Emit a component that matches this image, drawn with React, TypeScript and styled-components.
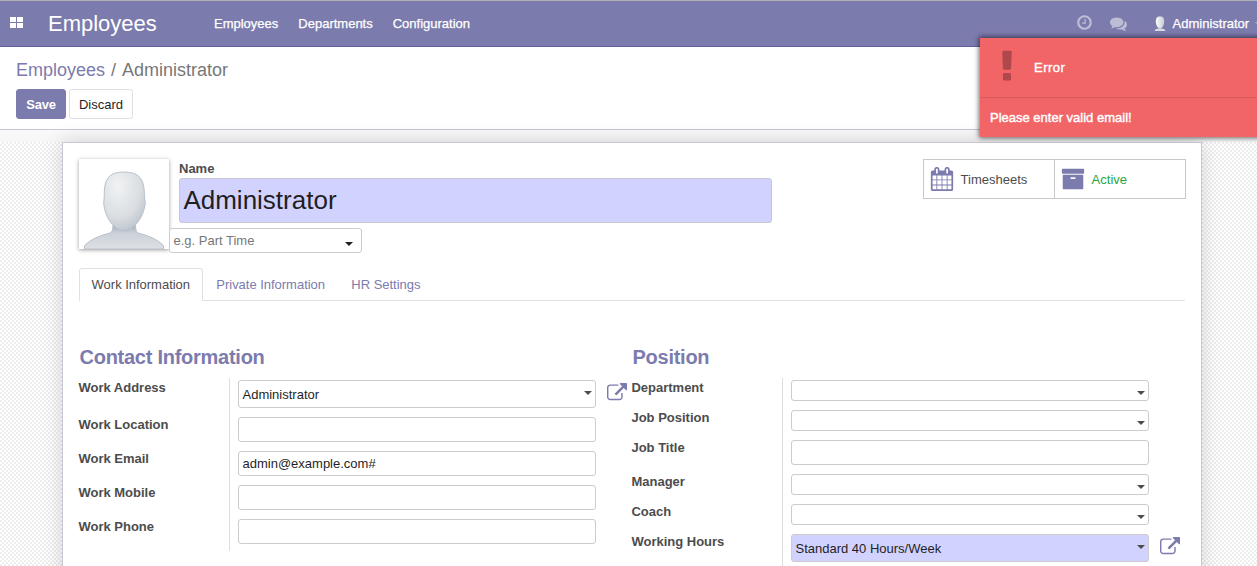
import React from 'react';
import styled, { createGlobalStyle } from 'styled-components';

const PURPLE = '#7c7bad';

const Global = createGlobalStyle`
  * { box-sizing: border-box; }
  html, body { margin: 0; height: 566px; overflow: hidden; }
  body {
    font: 13px/20px "Liberation Sans", Arial, sans-serif;
    color: #4c4c4c;
    background: #fff;
  }
  input, button { font: inherit; }
`;

const Page = styled.div`
  position: relative;
  width: 1257px;
  height: 566px;
  overflow: hidden;
  display: flex;
  flex-direction: column;
`;

const Navbar = styled.nav`
  flex: none;
  display: flex;
  align-items: center;
  height: 47px;
  border-top: 1px solid #afafb4;
  border-bottom: 1px solid #5f5e97;
  background: ${PURPLE};
  color: #fff;
  padding-left: 10px;
`;

const AppsIcon = styled.span`
  display: grid;
  grid-template-columns: 6px 6px;
  gap: 1px;
  width: 13px;
  margin: 0 25px 2px 0;
  i { height: 5px; background: #fff; }
`;

const Brand = styled.span`
  width: 166px;
  font-size: 22px;
`;

const NavLink = styled.a`
  margin-right: 20px;
  white-space: nowrap;
  -webkit-text-stroke: 0.25px #fff;
`;

const Systray = styled.div`
  display: flex;
  align-items: center;
  gap: 17px;
  margin-left: auto;
  > svg { flex: none; margin-bottom: 2px; }
  > svg + svg { margin-bottom: 0; }
`;

const UserMenu = styled.span`
  display: flex;
  align-items: center;
  width: 103px;
  overflow: hidden;
  margin-left: 10px;
  gap: 6px;
  white-space: nowrap;
  -webkit-text-stroke: 0.25px #fff;
  svg { flex: none; margin-right: 0.6px; }
`;

const Caret = styled.i<{ $c?: string }>`
  flex: none;
  border: 4px solid transparent;
  border-top-color: ${(p) => p.$c || '#4c4c4c'};
  border-bottom: 0;
`;

const ControlPanel = styled.header`
  flex: none;
  height: 83px;
  padding: 12px 16px 0;
  border-bottom: 1px solid #c8c8d3;
  background: #fff;
`;

const Breadcrumb = styled.div`
  height: 30px;
  line-height: 22px;
  font-size: 18px;
  color: #777;
  a { color: ${PURPLE}; }
  span { padding: 0 6px; }
`;

const Buttons = styled.div`
  display: flex;
  gap: 3px;
`;

const Button = styled.button<{ $primary?: boolean }>`
  height: 30px;
  width: ${(p) => (p.$primary ? 50 : 64)}px;
  padding: 1px 0 0;
  border-radius: 3px;
  border: 1px solid ${(p) => (p.$primary ? PURPLE : '#dfdfe6')};
  background: ${(p) => (p.$primary ? PURPLE : '#fff')};
  color: ${(p) => (p.$primary ? '#fff' : '#1f1f1f')};
  font-weight: ${(p) => (p.$primary ? 700 : 400)};
  letter-spacing: ${(p) => (p.$primary ? '-0.25px' : '0')};
`;

const Content = styled.main`
  flex: 1;
  min-height: 0;
  padding: 12px 55px 0 62px;
  background:
    linear-gradient(#f9f9f9, #f7f7f7) 0 0 / 100% 12px no-repeat,
    repeating-conic-gradient(#eeeeee 0 25%, #fff 0 50%) 0 0 / 4px 4px;
`;

const Sheet = styled.section`
  height: 700px;
  padding: 16px 16px 0;
  border: 1px solid #c8c8d3;
  background: #fff;
  box-shadow: 0 0 20px rgba(0, 0, 0, 0.16);
`;

const Header = styled.div`
  display: flex;
  height: 109px;
`;

const Avatar = styled.div`
  width: 90px;
  height: 90px;
  margin-right: 10px;
  box-shadow: 0 1px 4px rgba(0, 0, 0, 0.4);
  svg { display: block; }
`;

const TitleBlock = styled.div`
  width: 593px;
`;

const Label = styled.label`
  display: block;
  height: 19px;
  font-weight: 700;
  white-space: nowrap;
`;

const NameInput = styled.input`
  display: block;
  width: 593px;
  height: 45px;
  padding: 0 4px 0 3.4px;
  border: 1px solid #c8c8d3;
  border-radius: 3px;
  background: #d2d2ff;
  color: #1f1f1f;
  font-size: 26px;
`;

const TagSelect = styled.div`
  display: flex;
  align-items: center;
  justify-content: space-between;
  width: 193px;
  height: 25px;
  margin: 5px 0 0 -10px;
  padding: 0 8px 0 3.5px;
  border: 1px solid #ccc;
  border-radius: 3px;
  background: #fff;
  color: #777;
  i { margin-top: 6px; }
`;

const StatButtons = styled.div`
  display: flex;
  margin: 0 -1px 0 auto;
  height: 40px;
  border: 1px solid #c8c8c8;
`;

const StatButton = styled.div<{ $color?: string }>`
  display: flex;
  align-items: center;
  width: 130px;
  gap: 6.6px;
  padding-left: 6px;
  color: ${(p) => p.$color || '#4c4c4c'};
  span { padding-top: 2px; }
  & + & { width: 131px; border-left: 1px solid #c8c8c8; }
`;

const Tabs = styled.div`
  display: flex;
  height: 33px;
  border-bottom: 1px solid #dee2e6;
`;

const Tab = styled.a<{ $active?: boolean }>`
  height: 33px;
  padding: 6px 12px 6px 11.6px;
  margin-right: 0.7px;
  letter-spacing: -0.02px;
  border: 1px solid ${(p) => (p.$active ? '#dee2e6' : 'transparent')};
  border-bottom: 0;
  border-radius: 3px 3px 0 0;
  background: ${(p) => (p.$active ? '#fff' : 'transparent')};
  color: ${(p) => (p.$active ? '#4c4c4c' : PURPLE)};
`;

const Groups = styled.div`
  display: flex;
  padding-top: 43px;
`;

const Group = styled.div`
  width: 553px;
`;

const GroupTitle = styled.h2`
  margin: 0;
  padding-left: 0.5px;
  height: 34px;
  font-size: 20px;
  line-height: 26px;
  letter-spacing: -0.26px;
  color: ${PURPLE};
`;

const Fields = styled.div`
  display: grid;
  grid-template-columns: 151px 1fr;
`;

const LabelCell = styled.div<{ $h: number }>`
  height: ${(p) => p.$h}px;
  border-right: 1px solid #ddd;
  label { margin-left: -0.6px; }
`;

const ValueCell = styled.div`
  display: flex;
  padding: 2px 0 0 8px;
  svg { margin: 3px 0 0 11px; }
`;

const Field = styled.div<{ $h: number; $required?: boolean }>`
  display: flex;
  align-items: center;
  justify-content: space-between;
  width: 358px;
  height: ${(p) => p.$h}px;
  padding: ${(p) => (p.$h === 28 ? '1px' : '0')} 3px 0 3.5px;
  border: 1px solid #ccc;
  border-radius: 3px;
  background: ${(p) => (p.$required ? '#d2d2ff' : '#fff')};
  color: #1f1f1f;
  i { margin: ${(p) => (p.$h === 21 ? '5px 0 0 auto' : '0 0 4px auto')}; }
`;

const Toast = styled.aside`
  position: absolute;
  top: 38px;
  left: 980px;
  width: 300px;
  height: 99px;
  background: #f16567;
  color: #fff;
  -webkit-text-stroke: 0.4px #fff;
  box-shadow: 0 0 5px 1px rgba(0, 0, 0, 0.6);
`;

const ToastTitle = styled.div`
  display: flex;
  align-items: center;
  height: 60px;
  border-bottom: 1px solid #d95b5d;
  padding-left: 8px;
  letter-spacing: 0.5px;
  svg { margin: 0 8px 2px 0; stroke: none; }
`;

const ToastText = styled.div`
  padding: 10px;
`;

const ICONS = {
  clock:
    'M1024 544v448q0 14-9 23t-23 9h-320q-14 0-23-9t-9-23v-64q0-14 9-23t23-9h224v-352q0-14 9-23t23-9h64q14 0 23 9t9 23zm416 352q0-148-73-273t-198-198-273-73-273 73-198 198-73 273 73 273 198 198 273 73 273-73 198-198 73-273zm224 0q0 209-103 385.5t-279.5 279.5-385.5 103-385.5-103-279.5-279.5-103-385.5 103-385.5 279.5-279.5 385.5-103 385.5 103 279.5 279.5 103 385.5z',
  comments:
    'M1408 768q0 139-94 257t-256.5 186.5-353.5 68.5q-86 0-176-16-124 88-278 128-36 9-86 16h-3q-11 0-20.5-8t-11.5-21q-1-3-1-6.5t.5-6.5 2-6l2.5-5 3.5-5.5 4-5 4.5-5 4-4.5q5-6 23-25t26-29.5 22.5-29 25-38.5 20.5-44q-124-72-195-177t-71-224q0-139 94-257t256.5-186.5 353.5-68.5 353.5 68.5 256.5 186.5 94 257zm384 256q0 120-71 224.5t-195 176.5q10 24 20.5 44t25 38.5 22.5 29 26 29.5 23 25q1 1 4 4.5t4.5 5 4 5 3.5 5.5l2.5 5 2 6 .5 6.5-1 6.5q-3 14-13 22t-22 7q-50-7-86-16-154-40-278-128-90 16-176 16-271 0-472-132 58 4 88 4 161 0 309-45t264-129q125-92 192-212t67-254q0-77-23-152 129 71 204 178t75 230z',
  external:
    'M1408 928v320q0 119-84.5 203.5t-203.5 84.5h-832q-119 0-203.5-84.5t-84.5-203.5v-832q0-119 84.5-203.5t203.5-84.5h704q14 0 23 9t9 23v64q0 14-9 23t-23 9h-704q-66 0-113 47t-47 113v832q0 66 47 113t113 47h832q66 0 113-47t47-113v-320q0-14 9-23t23-9h64q14 0 23 9t9 23zm384-864v512q0 26-19 45t-45 19-45-19l-176-176-652 652q-10 10-23 10t-23-10l-114-114q-10-10-10-23t10-23l652-652-176-176q-19-19-19-45t19-45 45-19h512q26 0 45 19t19 45z',
  calendar:
    'M192 1664h288v-288h-288v288zm352 0h320v-288h-320v288zm-352-352h288v-320h-288v320zm352 0h320v-320h-320v320zm-352-384h288v-288h-288v288zm736 736h320v-288h-320v288zm-384-736h320v-288h-320v288zm768 736h288v-288h-288v288zm-384-352h320v-320h-320v320zm-352-864v-288q0-13-9.5-22.5t-22.5-9.5h-64q-13 0-22.5 9.5t-9.5 22.5v288q0 13 9.5 22.5t22.5 9.5h64q13 0 22.5-9.5t9.5-22.5zm736 864h288v-320h-288v320zm-384-384h320v-288h-320v288zm384 0h288v-288h-288v288zm32-480v-288q0-13-9.5-22.5t-22.5-9.5h-64q-13 0-22.5 9.5t-9.5 22.5v288q0 13 9.5 22.5t22.5 9.5h64q13 0 22.5-9.5t9.5-22.5zm384-64v1280q0 52-38 90t-90 38h-1408q-52 0-90-38t-38-90v-1280q0-52 38-90t90-38h128v-96q0-66 47-113t113-47h64q66 0 113 47t47 113v96h384v-96q0-66 47-113t113-47h64q66 0 113 47t47 113v96h128q52 0 90 38t38 90z',
  archive:
    'M1088 832q0-26-19-45t-45-19h-256q-26 0-45 19t-19 45 19 45 45 19h256q26 0 45-19t19-45zm576-192v960q0 26-19 45t-45 19h-1408q-26 0-45-19t-19-45v-960q0-26 19-45t45-19h1408q26 0 45 19t19 45zm64-448v256q0 26-19 45t-45 19h-1536q-26 0-45-19t-19-45v-256q0-26 19-45t45-19h1536q26 0 45 19t19 45z',
  exclamation:
    'M1088 1248v224q0 26-19 45t-45 19h-256q-26 0-45-19t-19-45v-224q0-26 19-45t45-19h256q26 0 45 19t19 45zm30-1056l-28 768q-1 26-20.5 45t-45.5 19h-256q-26 0-45.5-19t-20.5-45l-28-768q-1-26 17.5-45t44.5-19h320q26 0 44.5 19t17.5 45z',
};

const Icon = ({ name, size, color, opacity = 1 }: { name: keyof typeof ICONS; size: number; color: string; opacity?: number }) => (
  <svg width={size} height={size} viewBox="0 0 1792 1792" fill={color} opacity={opacity}>
    <path d={ICONS[name]} />
  </svg>
);

const Person = () => (
  <svg width="90" height="90" viewBox="0 0 90 90">
    <defs>
      <radialGradient id="face" cx="0.35" cy="0.25" r="0.9">
        <stop offset="0" stopColor="#f1f3f4" />
        <stop offset="0.6" stopColor="#d9dde1" />
        <stop offset="1" stopColor="#b3bbc6" />
      </radialGradient>
      <linearGradient id="body" x1="0" y1="0" x2="0" y2="1">
        <stop offset="0" stopColor="#a3adbb" />
        <stop offset="0.35" stopColor="#ccd2d9" />
        <stop offset="1" stopColor="#dce0e4" />
      </linearGradient>
    </defs>
    <rect width="90" height="90" fill="#fff" />
    <path d="M5.500 90V86.500Q14 78 31 74Q34 73 34 66H56.500Q56.500 73 59 74Q76 78 84.500 86.500V90Z" fill="url(#body)" stroke="#b9c1cb" />
    <path d="M45 13C58 13 64.500 18 65.300 32Q65.200 38 66.300 44C64.500 60 54 71.500 45 71.500S26 60 24.700 44Q25.500 38 25.300 32C26 18 32 13 45 13Z" fill="url(#face)" stroke="#b9c2cc" />
  </svg>
);

const SmallPerson = () => (
  <svg width="12" height="16" viewBox="0 0 12 16">
    <defs>
      <linearGradient id="mini" x1="0" y1="0" x2="1" y2="0">
        <stop offset="0" stopColor="#fbfcfb" />
        <stop offset="1" stopColor="#c6ced2" />
      </linearGradient>
    </defs>
    <path d="M0.500 15Q1 12.800 4 12.500H8Q11 12.800 11.500 15Z" fill="#d5dce4" />
    <path d="M6 0.500C9.300 0.500 10.400 2.500 10.200 6C10 9 8.500 12 6 12.500C3.500 12 2 9 1.800 6C1.600 2.500 2.700 0.500 6 0.500Z" fill="url(#mini)" />
  </svg>
);

type Row = { label: string; h: number; row: number; value?: string; select?: boolean; required?: boolean; link?: boolean };

const contact: Row[] = [
  { label: 'Work Address', h: 28, row: 37, value: 'Administrator', select: true, link: true },
  { label: 'Work Location', h: 25, row: 34 },
  { label: 'Work Email', h: 25, row: 34, value: 'admin@example.com#' },
  { label: 'Work Mobile', h: 25, row: 34 },
  { label: 'Work Phone', h: 25, row: 34 },
];

const position: Row[] = [
  { label: 'Department', h: 21, row: 30, select: true },
  { label: 'Job Position', h: 21, row: 30, select: true },
  { label: 'Job Title', h: 25, row: 34 },
  { label: 'Manager', h: 21, row: 30, select: true },
  { label: 'Coach', h: 21, row: 30, select: true },
  { label: 'Working Hours', h: 28, row: 37, value: 'Standard 40 Hours/Week', select: true, required: true, link: true },
];

const FieldGroup = ({ title, rows }: { title: string; rows: Row[] }) => (
  <Group>
    <GroupTitle>{title}</GroupTitle>
    <Fields>
      {rows.map((r) => (
        <React.Fragment key={r.label}>
          <LabelCell $h={r.row}>
            <Label>{r.label}</Label>
          </LabelCell>
          <ValueCell>
            <Field $h={r.h} $required={r.required}>
              {r.value}
              {r.select && <Caret />}
            </Field>
            {r.link && <Icon name="external" size={20} color={PURPLE} />}
          </ValueCell>
        </React.Fragment>
      ))}
    </Fields>
  </Group>
);

export default function App() {
  return (
    <Page>
      <Global />
      <Navbar>
        <AppsIcon><i /><i /><i /><i /></AppsIcon>
        <Brand>Employees</Brand>
        <NavLink>Employees</NavLink>
        <NavLink>Departments</NavLink>
        <NavLink>Configuration</NavLink>
        <Systray>
          <Icon name="clock" size={17} color="#fff" opacity={0.5} />
          <Icon name="comments" size={17} color="#fff" opacity={0.5} />
          <UserMenu>
            <SmallPerson />
            Administrator
            <Caret $c="#b0afce" />
          </UserMenu>
        </Systray>
      </Navbar>
      <ControlPanel>
        <Breadcrumb><a>Employees</a><span>/</span>Administrator</Breadcrumb>
        <Buttons>
          <Button $primary>Save</Button>
          <Button>Discard</Button>
        </Buttons>
      </ControlPanel>
      <Content>
        <Sheet>
          <Header>
            <Avatar><Person /></Avatar>
            <TitleBlock>
              <Label>Name</Label>
              <NameInput defaultValue="Administrator" />
              <TagSelect>e.g. Part Time<Caret $c="#1f1f1f" /></TagSelect>
            </TitleBlock>
            <StatButtons>
              <StatButton><Icon name="calendar" size={24} color={PURPLE} /><span>Timesheets</span></StatButton>
              <StatButton $color="#28a745"><Icon name="archive" size={24} color={PURPLE} /><span>Active</span></StatButton>
            </StatButtons>
          </Header>
          <Tabs>
            <Tab $active>Work Information</Tab>
            <Tab>Private Information</Tab>
            <Tab>HR Settings</Tab>
          </Tabs>
          <Groups>
            <FieldGroup title="Contact Information" rows={contact} />
            <FieldGroup title="Position" rows={position} />
          </Groups>
        </Sheet>
      </Content>
      <Toast>
        <ToastTitle><Icon name="exclamation" size={38} color="#b0474a" />Error</ToastTitle>
        <ToastText>Please enter valid email!</ToastText>
      </Toast>
    </Page>
  );
}
